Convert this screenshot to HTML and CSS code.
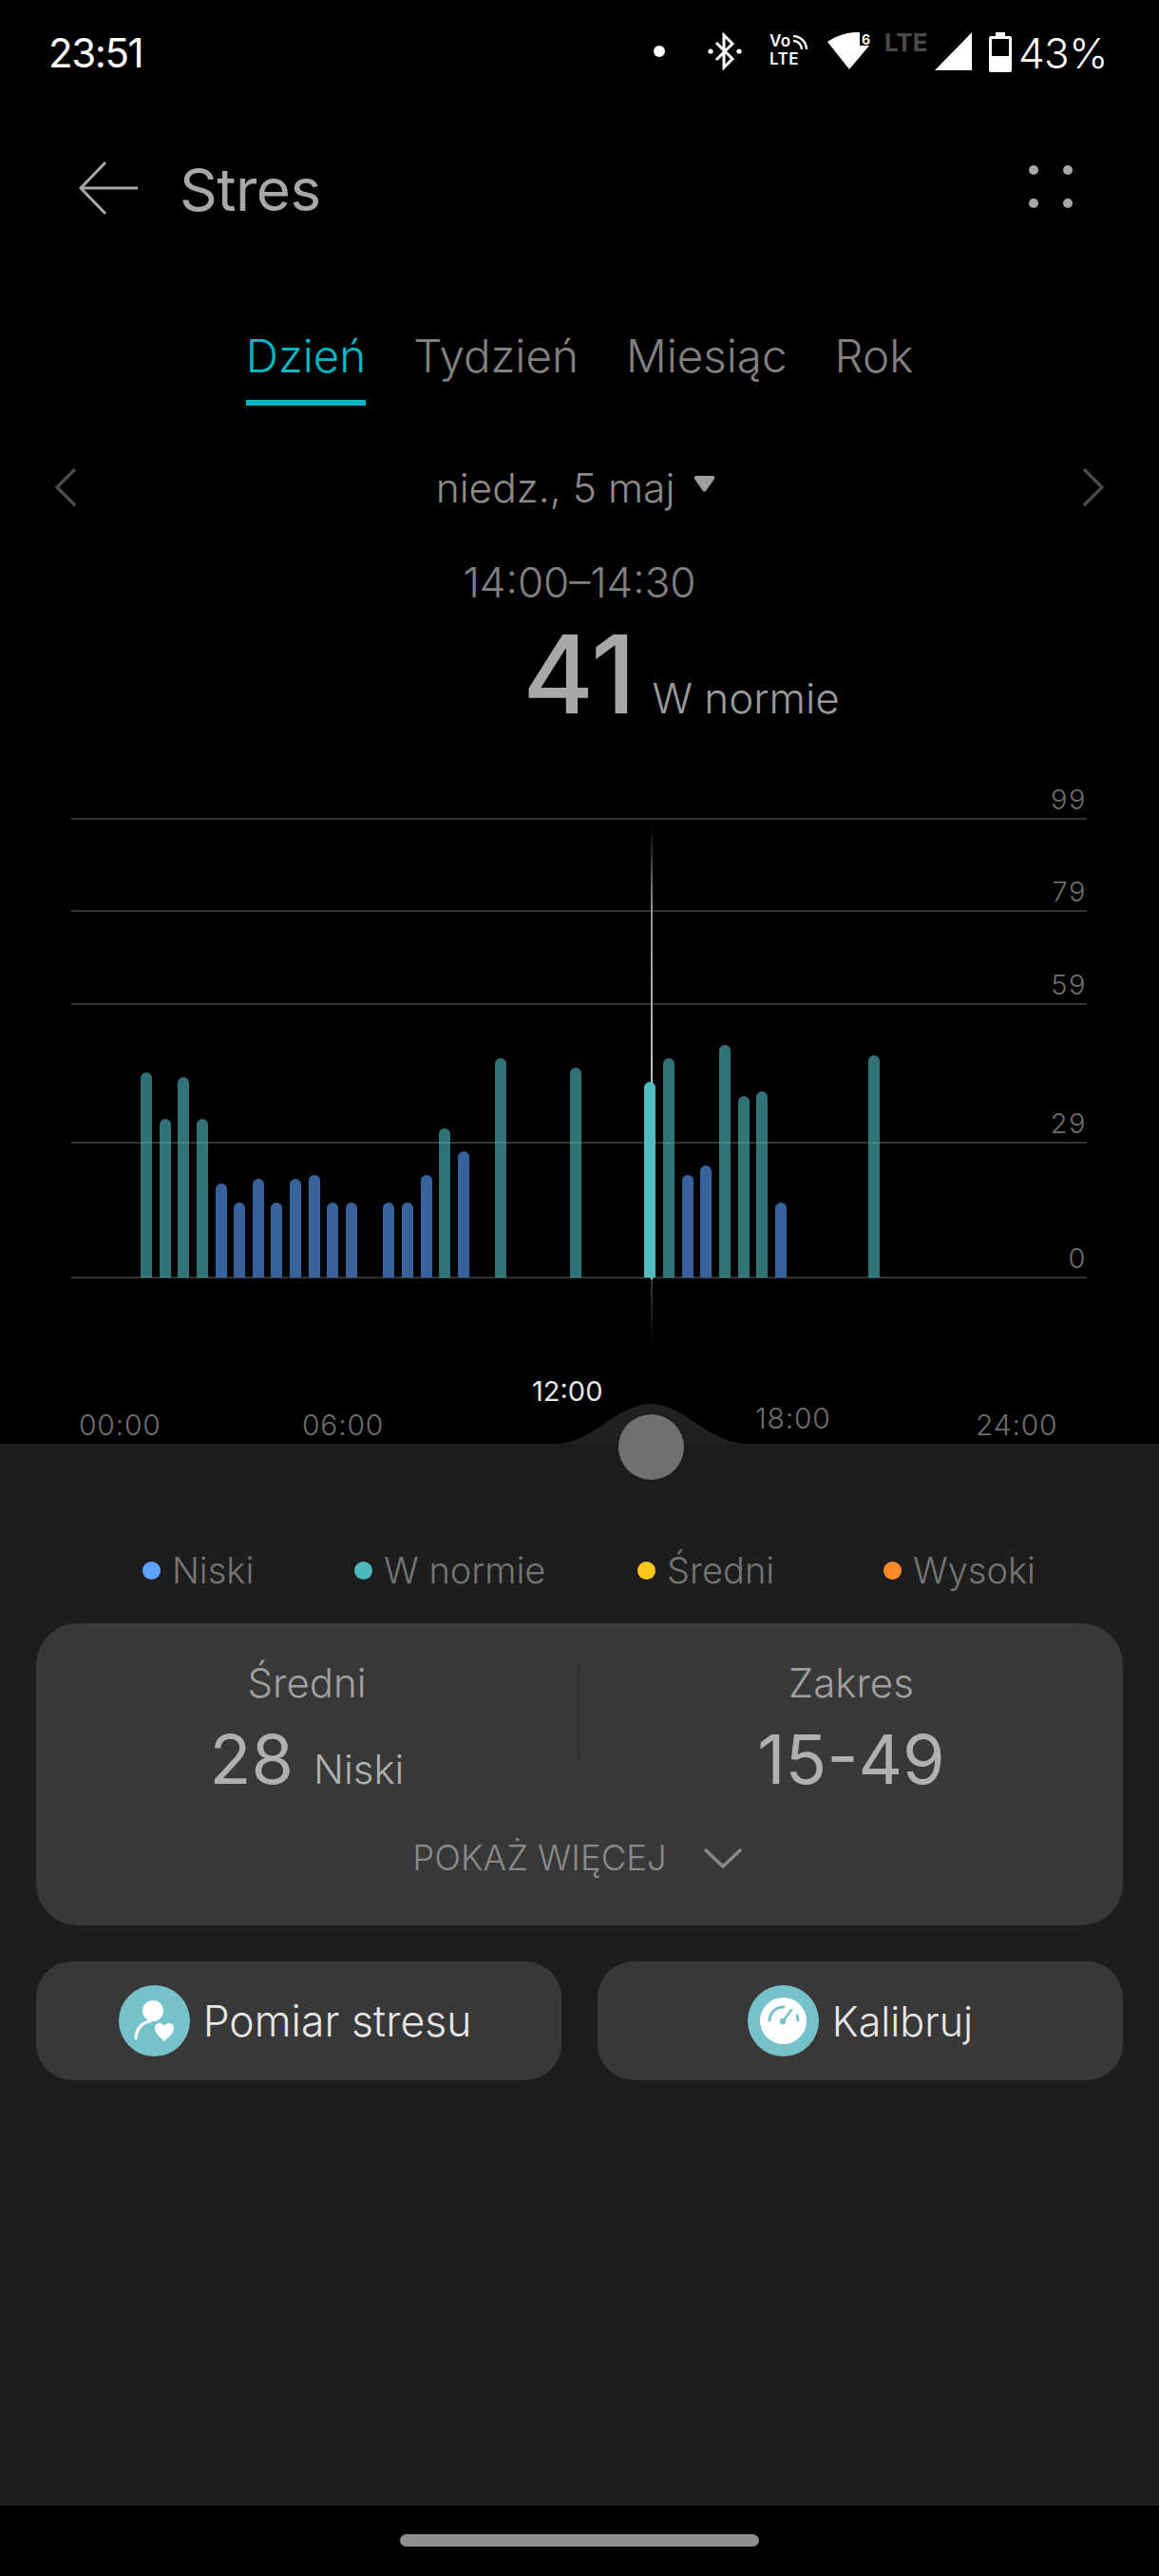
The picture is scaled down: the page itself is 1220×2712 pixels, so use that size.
FILE: index.html
```html
<!DOCTYPE html>
<html lang="pl">
<head>
    <meta charset="utf-8" />
    <title>Stres</title>
    <link rel="stylesheet" href="styles.css">
</head>
<body>

    <div id="status">
        <span class="clock">23:51</span>
        <div class="status-icons">
            <i class="status-dot"></i>
            <svg class="ic-bt" width="36" height="40" viewBox="0 0 36 40"><path d="M9 11 L26 28 L17 37 V3 L26 12 L9 29" fill="none" stroke="#fff" stroke-width="3"/><circle cx="3" cy="20" r="2.6" fill="#fff"/><circle cx="33" cy="20" r="2.6" fill="#fff"/></svg>
            <div class="volte">
                <div class="volte-top">Vo<svg width="16" height="16" viewBox="0 0 16 16"><path d="M1 6 A9 9 0 0 1 10 15 M1 1 A14 14 0 0 1 15 15" fill="none" stroke="#fff" stroke-width="2.4"/></svg></div>
                <div>LTE</div>
            </div>
            <svg class="ic-wifi" width="46" height="40" viewBox="0 0 46 40"><path d="M0 10 Q16 -1 34 0 V14 H44 L23 39 Z" fill="#fff"/><text x="36" y="13" class="wifi-six">6</text></svg>
            <span class="lte-off">LTE</span>
            <svg class="ic-signal" width="39" height="40" viewBox="0 0 39 40"><path d="M39 0 V40 H0 Z" fill="#fff"/></svg>
            <svg class="ic-battery" width="24" height="42" viewBox="0 0 24 42"><path d="M7 0 H17 V4 H22 Q24 4 24 6 V40 Q24 42 22 42 H2 Q0 42 0 40 V6 Q0 4 2 4 H7 Z" fill="#fff"/><rect x="3" y="7" width="18" height="18" fill="#000"/></svg>
            <span class="percent">43%</span>
        </div>
    </div>

    <div id="toolbar">
        <svg class="back" width="64" height="58" viewBox="0 0 64 58"><path d="M29 2 L3 29 L29 56 M3 29 H63" fill="none" stroke="#a8a8a8" stroke-width="3"/></svg>
        <h1>Stres</h1>
        <div class="menu"><i></i><i></i><i></i><i></i></div>
    </div>

    <div id="tabs">
        <a class="tab active">Dzień</a>
        <a class="tab">Tydzień</a>
        <a class="tab">Miesiąc</a>
        <a class="tab">Rok</a>
    </div>

    <div id="date">
        <svg width="24" height="42" viewBox="0 0 24 42"><path d="M22 2 L3 21 L22 40" fill="none" stroke="#4a4a4a" stroke-width="3.5"/></svg>
        <div class="date-label">niedz., 5 maj <svg class="caret" width="23" height="17" viewBox="0 0 23 17"><path d="M3 0 H20 Q23 0 22 3 L13 16 Q11.5 17 10 16 L1 3 Q0 0 3 0 Z" fill="#a0a0a0"/></svg></div>
        <svg width="24" height="42" viewBox="0 0 24 42"><path d="M2 2 L21 21 L2 40" fill="none" stroke="#4a4a4a" stroke-width="3.5"/></svg>
    </div>

    <div id="reading">
        <div class="range">14:00–14:30</div>
        <div class="value"><b>41</b><span>W normie</span></div>
    </div>

    <div id="chart">
        <div class="row r1"><span>99</span></div>
        <div class="row r2"><span>79</span></div>
        <div class="row r3"><span>59</span></div>
        <div class="row r4"><span>29</span></div>
        <div class="row r5"><span>0</span></div>
        <div class="cursor"></div>
        <div class="bars">
            <i class="bar mid" style="grid-column:1;height:216px"></i>
            <i class="bar mid" style="grid-column:2;height:167px"></i>
            <i class="bar mid" style="grid-column:3;height:211px"></i>
            <i class="bar mid" style="grid-column:4;height:167px"></i>
            <i class="bar low" style="grid-column:5;height:99px"></i>
            <i class="bar low" style="grid-column:6;height:79px"></i>
            <i class="bar low" style="grid-column:7;height:104px"></i>
            <i class="bar low" style="grid-column:8;height:79px"></i>
            <i class="bar low" style="grid-column:9;height:104px"></i>
            <i class="bar low" style="grid-column:10;height:108px"></i>
            <i class="bar low" style="grid-column:11;height:79px"></i>
            <i class="bar low" style="grid-column:12;height:79px"></i>
            <i class="bar low" style="grid-column:14;height:79px"></i>
            <i class="bar low" style="grid-column:15;height:79px"></i>
            <i class="bar low" style="grid-column:16;height:108px"></i>
            <i class="bar mid" style="grid-column:17;height:157px"></i>
            <i class="bar low" style="grid-column:18;height:133px"></i>
            <i class="bar mid" style="grid-column:20;height:231px"></i>
            <i class="bar mid" style="grid-column:24;height:221px"></i>
            <i class="bar sel" style="grid-column:28;height:206px"></i>
            <i class="bar mid" style="grid-column:29;height:231px"></i>
            <i class="bar low" style="grid-column:30;height:108px"></i>
            <i class="bar low" style="grid-column:31;height:118px"></i>
            <i class="bar mid" style="grid-column:32;height:245px"></i>
            <i class="bar mid" style="grid-column:33;height:191px"></i>
            <i class="bar mid" style="grid-column:34;height:196px"></i>
            <i class="bar low" style="grid-column:35;height:79px"></i>
            <i class="bar mid" style="grid-column:40;height:234px"></i>
        </div>
    </div>

    <div id="hours">
        <span class="h0">00:00</span>
        <span class="h6">06:00</span>
        <span class="h12">12:00</span>
        <span class="h18">18:00</span>
        <span class="h24">24:00</span>
    </div>

    <div id="sheet">
        <svg class="bump" width="202" height="42" viewBox="0 0 202 42"><path d="M0 42 C40 42 65 0 101 0 C137 0 162 42 202 42 Z" fill="#212121"/></svg>
        <div class="handle"></div>

        <div id="legend">
            <div class="key k1"><i class="blue"></i>Niski</div>
            <div class="key k2"><i class="teal"></i>W normie</div>
            <div class="key k3"><i class="yellow"></i>Średni</div>
            <div class="key k4"><i class="orange"></i>Wysoki</div>
        </div>

        <div class="card">
            <div class="stats">
                <div class="stat">
                    <div class="stat-name">Średni</div>
                    <div class="stat-value">28<small>Niski</small></div>
                </div>
                <div class="stat">
                    <div class="stat-name">Zakres</div>
                    <div class="stat-value">15-49</div>
                </div>
            </div>
            <div class="more">POKAŻ WIĘCEJ
                <svg width="42" height="24" viewBox="0 0 42 24"><path d="M2 3 L21 21 L40 3" fill="none" stroke="#8a8a8a" stroke-width="3.5"/></svg>
            </div>
        </div>

        <div class="actions">
            <a class="action measure">
                <svg width="75" height="75" viewBox="0 0 75 75"><circle cx="37.5" cy="37.5" r="37.5" fill="#76c2cb"/><circle cx="36" cy="27" r="11" fill="#fff"/><path d="M18 56 C18 46 25 39 33 38" fill="none" stroke="#fff" stroke-width="3.2" stroke-linecap="round"/><path d="M48 59 C43 54 38 51 38 45 C38 40 45 38 48 43 C51 38 58 40 58 45 C58 51 53 54 48 59 Z" fill="#fff"/></svg>
                Pomiar stresu
            </a>
            <a class="action">
                <svg width="75" height="75" viewBox="0 0 75 75"><circle cx="37.5" cy="37.5" r="37.5" fill="#76c2cb"/><circle cx="37.5" cy="37.5" r="24.5" fill="#fff"/><path d="M23 37 A14.5 14.5 0 0 1 38 23" fill="none" stroke="#76c2cb" stroke-width="3" stroke-linecap="round"/><path d="M52 32 L53 37" fill="none" stroke="#76c2cb" stroke-width="3" stroke-linecap="round"/><path d="M37.5 37.5 L46 26" stroke="#76c2cb" stroke-width="2.5" stroke-linecap="round"/><circle cx="37" cy="38" r="3.2" fill="#76c2cb"/></svg>
                Kalibruj
            </a>
        </div>
    </div>

    <div id="navbar"><i></i></div>

</body>
</html>
```

FILE: styles.css
```css
* {
    box-sizing: border-box;
}

html, body {
    margin: 0;
    padding: 0;
}

body {
    width: 1220px;
    height: 2712px;
    overflow: hidden;
    background: #000;
    color: #a8a8a8;
    font: 300 42px Inter, 'Noto Sans', sans-serif;
    display: flex;
    flex-direction: column;
}

i {
    display: block;
}

/* status bar */
#status {
    height: 112px;
    flex: none;
    padding: 34px 54px 0 51px;
    display: flex;
    justify-content: space-between;
    align-items: flex-start;
    color: #fff;
}

.clock {
    font-size: 42px;
    font-weight: 400;
    line-height: 44px;
    letter-spacing: -1.4px;
}

.status-icons {
    display: flex;
    align-items: flex-start;
}

.status-dot {
    width: 12px;
    height: 12px;
    border-radius: 50%;
    background: #fff;
    margin: 14px 45px 0 0;
}

.ic-bt {
    margin: 0 29px 0 0;
}

.volte {
    width: 46px;
    margin-right: 15px;
    font-size: 17px;
    font-weight: 600;
    line-height: 19px;
    letter-spacing: .5px;
}

.volte-top {
    display: flex;
    align-items: flex-end;
    gap: 1px;
}

.ic-wifi {
    margin-right: 14px;
}

.wifi-six {
    font-size: 14px;
    font-weight: 700;
    fill: #fff;
}

.lte-off {
    width: 48px;
    margin-right: 5px;
    font-size: 26px;
    font-weight: 700;
    line-height: 22px;
    color: #4a4a4a;
}

.ic-signal {
    margin-right: 18px;
}

.ic-battery {
    margin-right: 7px;
}

.percent {
    font-size: 44px;
    line-height: 44px;
    letter-spacing: -.5px;
}

/* toolbar */
#toolbar {
    height: 114px;
    flex: none;
    padding: 54px 95px 0 82px;
    display: flex;
    align-items: flex-start;
}

.back {
    margin-top: 3px;
}

h1 {
    margin: -2px 0 0 43px;
    font-size: 62px;
    font-weight: 400;
    line-height: 72px;
    letter-spacing: -.5px;
}

.menu {
    margin-left: auto;
    width: 42px;
    display: grid;
    grid-template-columns: repeat(2, 10px);
    gap: 25px 26px;
    padding-top: 8px;
}

.menu i {
    width: 10px;
    height: 10px;
    border-radius: 50%;
    background: #a8a8a8;
}

/* day / week / month / year */
#tabs {
    height: 201px;
    flex: none;
    padding-top: 120px;
    display: flex;
    justify-content: center;
    gap: 50px;
    font-size: 47.5px;
    color: #808080;
}

.tab {
    height: 81px;
    line-height: 58px;
}

.tab.active {
    color: #00b8c4;
    border-bottom: 6px solid #00b8c4;
}

#date {
    height: 52px;
    flex: none;
    margin-top: 60px;
    padding: 0 57px;
    display: flex;
    justify-content: space-between;
    align-items: center;
}

.date-label {
    display: flex;
    align-items: center;
    gap: 20px;
    font-size: 42.5px;
    color: #8a8a8a;
    padding-right: 8px;
}

.caret {
    margin-bottom: 8px;
}

#reading {
    margin-top: 49px;
    text-align: center;
}

.range {
    font-size: 44px;
    line-height: 50px;
    color: #808080;
}

.value {
    margin-top: 17px;
    height: 110px;
    padding-left: 214px;
    display: flex;
    justify-content: center;
    align-items: baseline;
    gap: 17px;
    line-height: 110px;
}

.value b {
    font-size: 114px;
    font-weight: 500;
}

.value span {
    font-size: 44px;
    color: #9a9a9a;
}

/* chart */
#chart {
    position: relative;
    margin: 58px 76px 0 75px;
    flex: none;
}

.row {
    border-bottom: 2px solid #333;
    display: flex;
    justify-content: flex-end;
    align-items: flex-end;
    font-size: 29px;
    line-height: 32px;
    letter-spacing: 1.5px;
    color: #6e6e6e;
}

.row span {
    padding-bottom: 3px;
}

.r1 { height: 40px; }
.r2 { height: 97px; }
.r3 { height: 98px; }
.r4 { height: 146px; }
.r5 { height: 142px; }

.bars {
    position: absolute;
    left: 73px;
    bottom: 1px;
    display: grid;
    grid-template-columns: repeat(40, 12px);
    column-gap: 7.65px;
    align-items: end;
}

.bar {
    border-radius: 6px 6px 0 0;
}

.bar.mid { background: rgba(77, 184, 189, .62); }
.bar.low { background: #38629c; }
.bar.sel { background: #50bcc2; }

.cursor {
    position: absolute;
    left: 610px;
    top: 47px;
    bottom: -72px;
    width: 2px;
    background: linear-gradient(#000, #909090 15%, #bdbdbd 45%, #bdbdbd 87%, #3a3a3a 87%, #000);
}

/* hour labels */
#hours {
    position: relative;
    height: 0;
    flex: none;
    color: #6e6e6e;
    font-size: 30px;
    letter-spacing: .8px;
}

#hours span {
    position: absolute;
    line-height: 36px;
    top: 136px;
}

#hours .h0 { left: 83px; }
#hours .h6 { left: 318px; }
#hours .h12 { left: 560px; top: 101px; font-size: 29px; font-weight: 400; letter-spacing: 0; color: #e6e6e6; }
#hours .h18 { left: 795px; top: 129px; }
#hours .h24 { left: 1027px; }

/* bottom sheet */
#sheet {
    position: relative;
    flex: 1;
    margin-top: 174px;
    background: #1d1d1d;
    padding: 0 38px;
}

.bump {
    position: absolute;
    left: 584px;
    top: -42px;
}

.handle {
    position: absolute;
    left: 650.5px;
    top: -31.5px;
    width: 69px;
    height: 69px;
    border-radius: 50%;
    background: #707070;
    box-shadow: 0 0 8px rgba(0, 0, 0, .25);
}

#legend {
    position: relative;
    height: 189px;
    font-size: 38px;
    color: #757575;
}

.key {
    position: absolute;
    top: 110px;
    display: flex;
    align-items: center;
    gap: 12px;
    line-height: 46px;
}

.key i {
    width: 19px;
    height: 19px;
    border-radius: 50%;
}

.k1 { left: 112px; }
.k2 { left: 335px; }
.k3 { left: 633px; }
.k4 { left: 892px; }

.blue { background: #5ea3ff; }
.teal { background: #4db8bd; }
.yellow { background: #ffc61a; }
.orange { background: #ff8a2a; }

.card {
    height: 318px;
    background: #383838;
    border-radius: 44px;
    padding-top: 45px;
}

.stats {
    display: flex;
}

.stat {
    flex: 1;
    height: 100px;
    text-align: center;
}

.stat:first-child {
    border-right: 2px solid #2f2f2f;
    flex: none;
    width: 572px;
}

.stat-name {
    margin-top: -7px;
    line-height: 50px;
    color: #a0a0a0;
}

.stat-value {
    margin-top: 12px;
    font-size: 72px;
    font-weight: 400;
    line-height: 86px;
    color: #b0b0b0;
}

.stat-value small {
    font-size: 42px;
    font-weight: 300;
    margin-left: 21px;
}

.more {
    margin-top: 80px;
    display: flex;
    justify-content: center;
    align-items: center;
    gap: 38px;
    padding-right: 4px;
    font-size: 36.5px;
    line-height: 44px;
    color: #8a8a8a;
}

.actions {
    margin-top: 38px;
    display: flex;
    justify-content: space-between;
}

.action {
    width: 553px;
    height: 125px;
    border-radius: 38px;
    background: #383838;
    display: flex;
    justify-content: center;
    align-items: center;
    gap: 14px;
    font-size: 43px;
    color: #e6e6e6;
}

.action.measure {
    padding-right: 8px;
    font-size: 44.5px;
}

#navbar {
    height: 74px;
    flex: none;
    padding-top: 30px;
    display: flex;
    justify-content: center;
}

#navbar i {
    width: 378px;
    height: 13px;
    border-radius: 7px;
    background: #8e8e8e;
}
```
